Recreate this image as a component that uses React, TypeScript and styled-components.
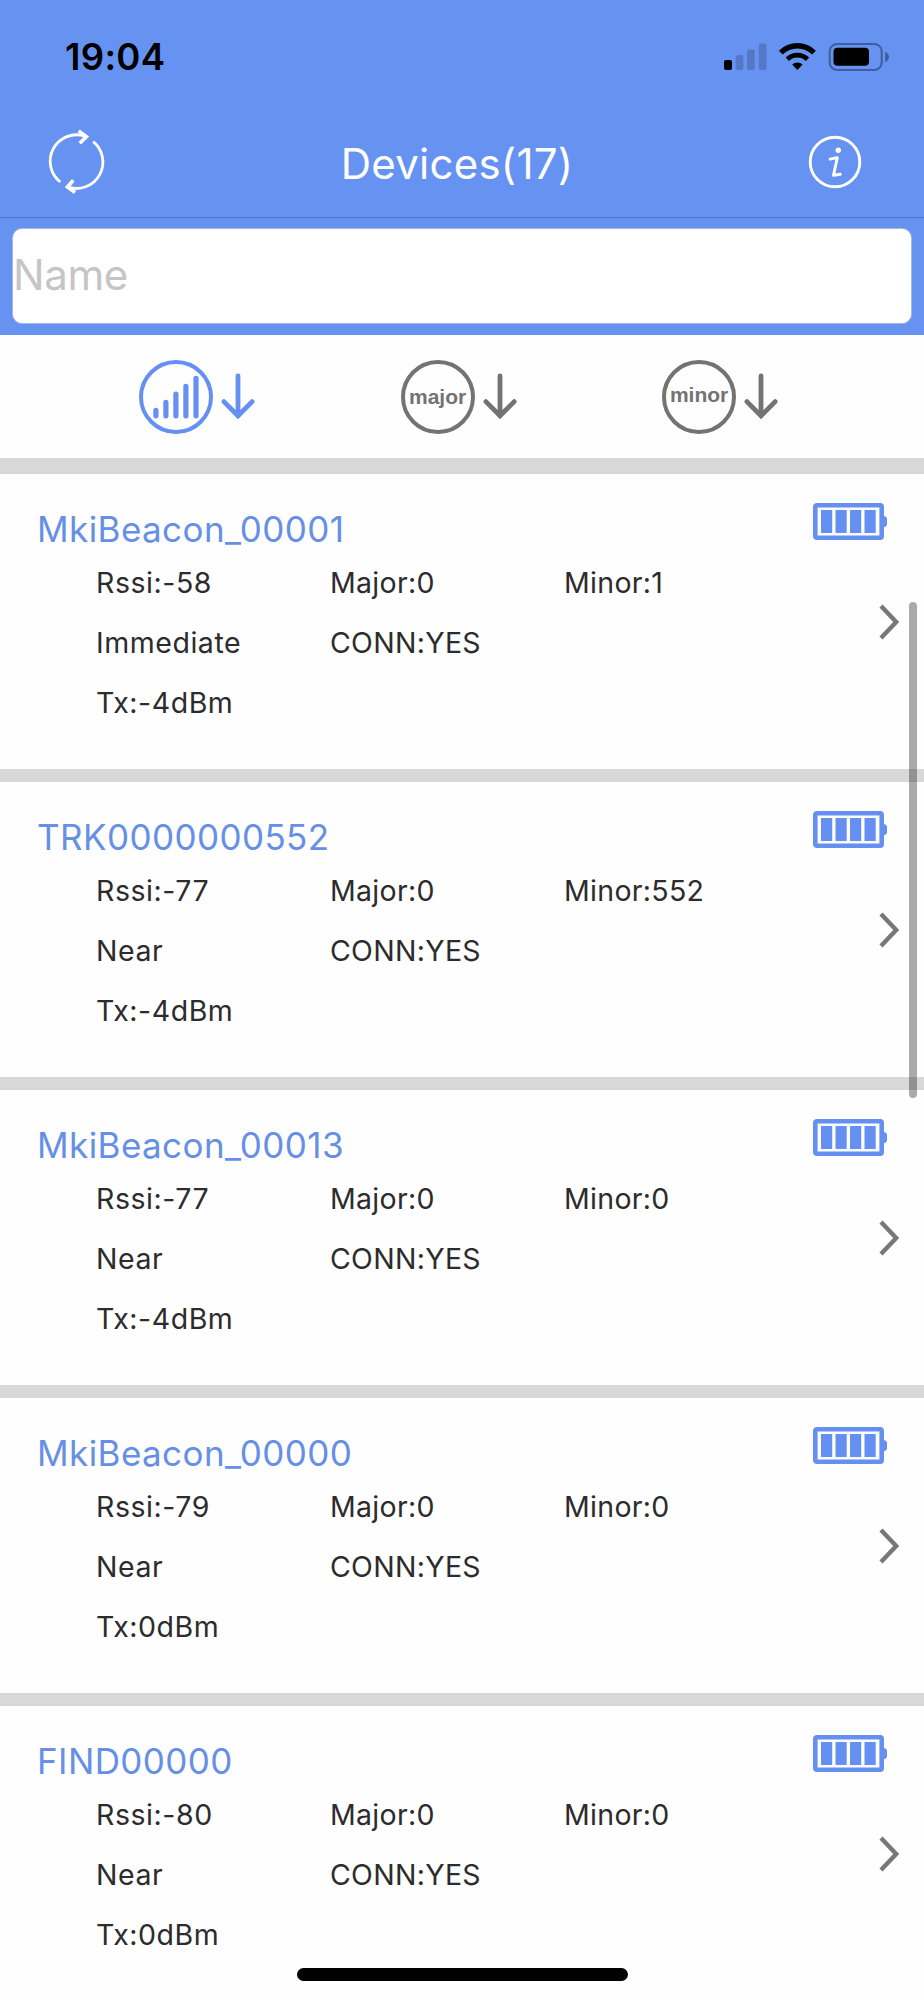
import React from "react";
import styled, { createGlobalStyle } from "styled-components";

const BLUE = "#6692f1";
const ICON_BLUE = "#668ff2";
const GRAY = "#737373";
const RULE = "#d8d8d8";

const GlobalStyle = createGlobalStyle`
  * { box-sizing: border-box; }
  body { margin: 0; background: #fefefe; }
`;

const Screen = styled.div`
  position: relative;
  display: flex;
  flex-direction: column;
  width: 924px;
  height: 2000px;
  overflow: hidden;
  background: #fefefe;
  font-family: Inter, "Liberation Sans", sans-serif;
  white-space: nowrap;
`;

const StatusBar = styled.div`
  display: flex;
  flex: none;
  align-items: center;
  justify-content: space-between;
  height: 113px;
  padding: 0 34px 0 65px;
  background: ${BLUE};
`;

const Clock = styled.span`
  font-size: 36.5px;
  font-weight: 600;
  line-height: 40px;
  letter-spacing: 0.3px;
  color: #000;
`;

const StatusIcons = styled.svg`
  display: block;
  width: 168px;
  height: 32px;
`;

const NavBar = styled.header`
  display: flex;
  flex: none;
  align-items: center;
  justify-content: space-between;
  height: 105px;
  padding: 0 59px 6px 47px;
  border-bottom: 1px solid #5377c8;
  background: ${BLUE};
`;

const NavButton = styled.button`
  display: flex;
  padding: 0;
  border: 0;
  background: none;
`;

const Title = styled.h1`
  margin: 3px 0 0 2px;
  font-size: 42px;
  font-weight: 400;
  line-height: 50px;
  letter-spacing: 0.25px;
  color: #fff;
`;

const SearchBar = styled.div`
  display: flex;
  flex: none;
  height: 117px;
  padding: 10px 12px 11px;
  background: ${BLUE};
`;

const SearchInput = styled.input`
  width: 100%;
  min-width: 0;
  padding: 0 0 3px;
  border: 1px solid #a9b9dc;
  border-radius: 10px;
  outline: 0;
  background: #fff;
  font-family: inherit;
  font-size: 42px;
  letter-spacing: -0.4px;

  &::placeholder {
    color: #c5c5c7;
    opacity: 1;
  }
`;

const SortBar = styled.nav`
  display: grid;
  flex: none;
  grid-template-columns: 262px 261.5px 261.5px;
  align-items: center;
  height: 123px;
  padding: 1px 0 0 138.6px;
`;

const SortButton = styled.button<{ $active?: boolean }>`
  display: flex;
  align-items: center;
  gap: 7px;
  padding: 0;
  border: 0;
  background: none;
  color: ${(p) => (p.$active ? ICON_BLUE : GRAY)};
`;

const SortBadge = styled.span<{ $lift?: number }>`
  display: flex;
  align-items: center;
  justify-content: center;
  width: 74px;
  height: 74px;
  padding-bottom: ${(p) => p.$lift ?? 0}px;
  border: 4px solid currentColor;
  border-radius: 50%;
  font: bold 21px/24px "Liberation Sans", Arial, sans-serif;
`;

const List = styled.main`
  flex: none;
  border-top: 16px solid ${RULE};
`;

const Card = styled.article`
  display: flex;
  justify-content: space-between;
  height: 308px;
  padding: 32px 25px 0 37px;
  border-bottom: 13px solid ${RULE};
`;

const DeviceName = styled.h2`
  margin: 0;
  font-size: 35px;
  font-weight: 400;
  line-height: 47px;
  letter-spacing: 0.42px;
  color: #668fe6;
`;

const Details = styled.div`
  display: grid;
  grid-template-columns: repeat(3, 234px);
  grid-auto-rows: 60px;
  align-items: center;
  padding-left: 59px;
`;

const Detail = styled.span<{ $column: number }>`
  grid-column: ${(p) => p.$column};
  font-size: 28.5px;
  line-height: 60px;
  letter-spacing: ${(p) => (p.$column === 1 ? 0.55 : 0.3)}px;
  color: #2c2c2c;
`;

const CardAside = styled.div`
  display: flex;
  flex-direction: column;
  align-items: flex-end;
  gap: 63.5px;
  margin-top: -2.6px;
`;

const BatteryWrap = styled.div`
  display: flex;
  padding-right: 12px;
`;

const ScrollThumb = styled.div`
  position: absolute;
  top: 602px;
  right: 7px;
  width: 8px;
  height: 496px;
  border-radius: 4px;
  background: rgba(0, 0, 0, 0.33);
`;

const HomeIndicator = styled.div`
  position: absolute;
  bottom: 19px;
  left: 297px;
  width: 331px;
  height: 13px;
  border-radius: 7px;
  background: #000;
`;

const StatusGlyphs = () => (
  <StatusIcons viewBox="722 41 168 32">
    <rect x="724" y="60" width="8" height="10" rx="2" fill="#000" />
    <g fill="#5578c6">
      <rect x="735.7" y="55" width="7.7" height="15" rx="2" />
      <rect x="747" y="49.5" width="7.7" height="20.5" rx="2" />
      <rect x="758.8" y="43.5" width="7.7" height="26.5" rx="2" />
    </g>
    <g fill="none" stroke="#000">
      <path d="M780.8 52.6a23.6 23.6 0 0 1 33.2 0" strokeWidth="5.4" />
      <path d="M787.3 59.2a14.4 14.4 0 0 1 20.2 0" strokeWidth="4.8" />
    </g>
    <path d="M797.4 70l-5.2-5.4a7.4 7.4 0 0 1 10.4 0z" fill="#000" />
    <rect x="829.7" y="43.9" width="52" height="26" rx="7.5" fill="none" stroke="#3f5c9b" strokeWidth="2" />
    <rect x="833.5" y="47.7" width="35.5" height="18" rx="4" fill="#000" />
    <path d="M885.2 51.8c5 2.5 5 7.9 0 10.4z" fill="#3f5c9b" />
  </StatusIcons>
);

const RefreshIcon = () => (
  <svg width="60" height="68" viewBox="47 129 60 68" fill="none" stroke="#fff">
    <path d="M60.3 183A26.4 26.4 0 0 1 85 137.200M93.2 142.600A26.4 26.4 0 0 1 68.500 188.200" strokeWidth="2.8" />
    <path d="M78.700 131.900L86.400 137.600L79.800 144.200M75 193.500L67.400 188L73.300 181.200" strokeWidth="3.6" />
  </svg>
);

const InfoIcon = () => (
  <svg width="60" height="60" viewBox="804.7 132 60 60" fill="none" stroke="#fff">
    <circle cx="834.7" cy="162" r="24.8" strokeWidth="2.9" />
    <circle cx="838" cy="150.300" r="2.700" fill="#fff" stroke="none" />
    <path d="M829.800 159.200L837 157.600L833.200 175.300L840 174.200" strokeWidth="2.9" strokeLinecap="round" strokeLinejoin="round" />
  </svg>
);

const SignalIcon = () => (
  <svg width="66" height="66" viewBox="142.7 363.7 66 66" stroke="currentColor" strokeWidth="5.2" strokeLinecap="round">
    <path d="M155.600 410v5.500M165.600 402v13.500M175.600 393.800v21.700M185.600 386v29.500M195.700 378v37.500" />
  </svg>
);

const ArrowDownIcon = () => (
  <svg width="36" height="48" viewBox="220 373 36 48" fill="none" stroke="currentColor" strokeWidth="4.8" strokeLinecap="round">
    <path d="M238 376V416M223.900 401.600L238 415.800L252.200 401.600" />
  </svg>
);

const BatteryIcon = () => (
  <svg width="74" height="37" viewBox="0 0 74 37" fill={ICON_BLUE}>
    <rect x="2.3" y="2.3" width="66.4" height="32.4" rx="1.5" fill="none" stroke={ICON_BLUE} strokeWidth="4.6" />
    <path d="M71 13.300h1.200l1.800 2v6.700l-1.800 2H71z" />
    <rect x="8" y="7" width="11.2" height="23" />
    <rect x="22.5" y="7" width="11.2" height="23" />
    <rect x="37" y="7" width="11.2" height="23" />
    <rect x="51.5" y="7" width="11.2" height="23" />
  </svg>
);

const ChevronIcon = () => (
  <svg width="20" height="36" viewBox="0 0 20 36" fill="none" stroke="#777" strokeWidth="4.4">
    <path d="M2 2.100L17.200 18L2 33.900" />
  </svg>
);

type Device = {
  name: string;
  rssi: number;
  minor: number;
  range: string;
  tx: number;
};

const devices: Device[] = [
  { name: "MkiBeacon_00001", rssi: -58, minor: 1, range: "Immediate", tx: -4 },
  { name: "TRK0000000552", rssi: -77, minor: 552, range: "Near", tx: -4 },
  { name: "MkiBeacon_00013", rssi: -77, minor: 0, range: "Near", tx: -4 },
  { name: "MkiBeacon_00000", rssi: -79, minor: 0, range: "Near", tx: 0 },
  { name: "FIND00000", rssi: -80, minor: 0, range: "Near", tx: 0 },
];

const DeviceCard = ({ device }: { device: Device }) => (
  <Card>
    <div>
      <DeviceName>{device.name}</DeviceName>
      <Details>
        <Detail $column={1}>{`Rssi:${device.rssi}`}</Detail>
        <Detail $column={2}>Major:0</Detail>
        <Detail $column={3}>{`Minor:${device.minor}`}</Detail>
        <Detail $column={1}>{device.range}</Detail>
        <Detail $column={2}>CONN:YES</Detail>
        <Detail $column={1}>{`Tx:${device.tx}dBm`}</Detail>
      </Details>
    </div>
    <CardAside>
      <BatteryWrap>
        <BatteryIcon />
      </BatteryWrap>
      <ChevronIcon />
    </CardAside>
  </Card>
);

export default function App() {
  return (
    <Screen>
      <GlobalStyle />
      <StatusBar>
        <Clock>19:04</Clock>
        <StatusGlyphs />
      </StatusBar>
      <NavBar>
        <NavButton aria-label="Refresh">
          <RefreshIcon />
        </NavButton>
        <Title>Devices(17)</Title>
        <NavButton aria-label="Info">
          <InfoIcon />
        </NavButton>
      </NavBar>
      <SearchBar>
        <SearchInput placeholder="Name" />
      </SearchBar>
      <SortBar>
        <SortButton $active aria-label="Sort by signal">
          <SortBadge>
            <SignalIcon />
          </SortBadge>
          <ArrowDownIcon />
        </SortButton>
        <SortButton>
          <SortBadge $lift={1}>major</SortBadge>
          <ArrowDownIcon />
        </SortButton>
        <SortButton>
          <SortBadge $lift={4}>minor</SortBadge>
          <ArrowDownIcon />
        </SortButton>
      </SortBar>
      <List>
        {devices.map((device) => (
          <DeviceCard key={device.name} device={device} />
        ))}
      </List>
      <ScrollThumb />
      <HomeIndicator />
    </Screen>
  );
}
